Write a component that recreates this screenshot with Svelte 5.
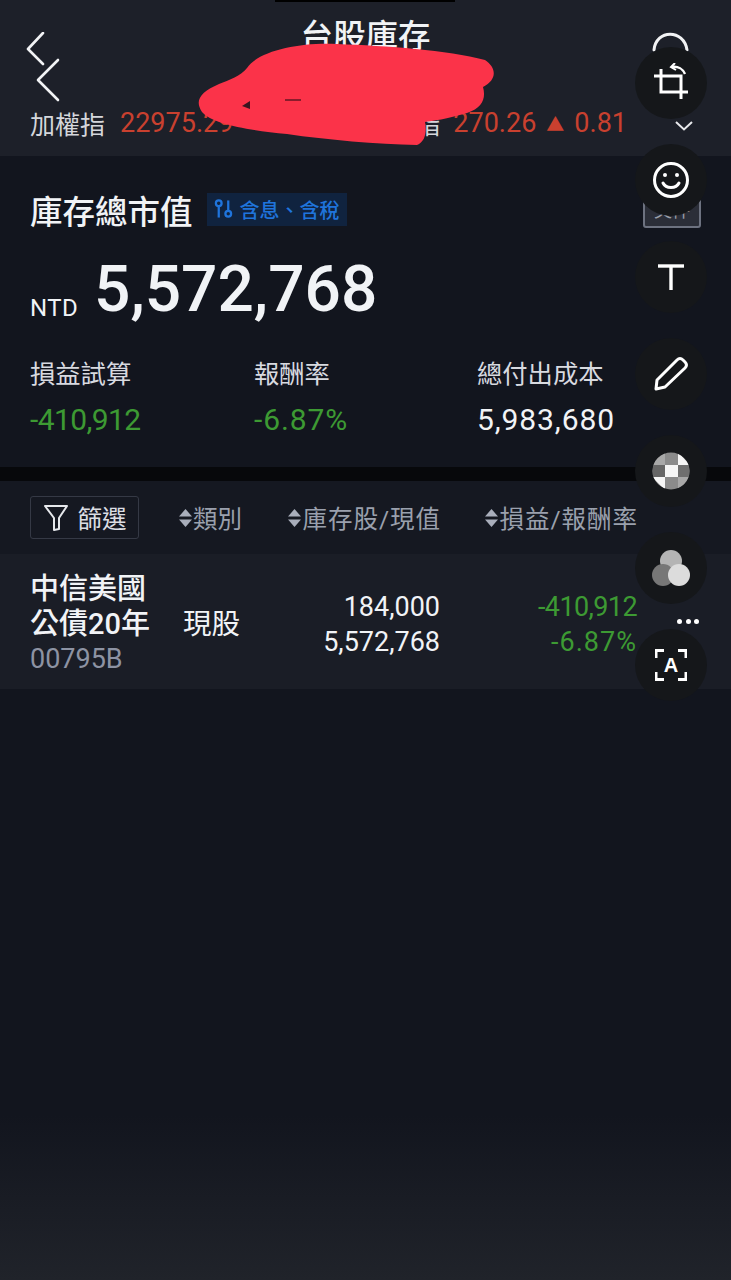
<script lang="ts">
  const stats = [
    { label: "損益試算", value: "-410,912", tone: "down tight" },
    { label: "報酬率", value: "-6.87%", tone: "down" },
    { label: "總付出成本", value: "5,983,680", tone: "" }
  ];
  const columns = ["類別", "庫存股/現值", "損益/報酬率"];
</script>

<div class="screen">
  <div class="notch"></div>

  <header class="top">
    <div class="nav">
      <svg class="back" width="40" height="70" viewBox="0 0 40 70" fill="none" stroke="#f2f3f5" stroke-width="2.6" stroke-linecap="round" stroke-linejoin="round">
        <path d="M17 1 L2 17 L17 32" />
        <path d="M32 28 L12 48 L32 68" />
      </svg>
      <h1>台股庫存</h1>
      <svg class="arc" width="38" height="20" viewBox="0 0 38 20" fill="none" stroke="#f2f3f5" stroke-width="3" stroke-linecap="round">
        <path d="M2 18 C4 -3 32 -3 35 18" />
      </svg>
    </div>
    <div class="ticker">
      <span class="tick-name">加權指</span>
      <span class="up">22975.29</span>
      <span class="tick-right">
        <span class="tick-name">櫃買指</span>
        <span class="up">270.26</span>
        <span class="up small">▲</span>
        <span class="up">0.81</span>
      </span>
      <svg class="more" width="18" height="10" viewBox="0 0 18 10" fill="none" stroke="#e8e9ec" stroke-width="2">
        <path d="M1 1 L9 8.5 L17 1" />
      </svg>
    </div>
  </header>

  <section class="summary">
    <div class="title-row">
      <h2>庫存總市值</h2>
      <div class="badge">
        <svg width="20" height="22" viewBox="0 0 20 22" fill="none" stroke="#1f74dc" stroke-width="2.4">
          <circle cx="5" cy="5" r="3" />
          <path d="M5 8 V20" />
          <path d="M15 2 V13" />
          <circle cx="15" cy="16" r="3" />
        </svg>
        <span>含息、含稅</span>
      </div>
      <div class="doc-btn"><span>文件</span></div>
    </div>
    <div class="total">
      <span class="cur">NTD</span>
      <span class="amount">5,572,768</span>
    </div>
    <div class="stats">
      {#each stats as s}
        <div class="stat">
          <div class="stat-label">{s.label}</div>
          <div class="stat-value {s.tone}">{s.value}</div>
        </div>
      {/each}
    </div>
  </section>

  <div class="divider"></div>

  <div class="table-head">
    <div class="filter">
      <svg width="26" height="28" viewBox="0 0 26 28" fill="none" stroke="#e6e8ec" stroke-width="2" stroke-linejoin="round">
        <path d="M2 2 H24 L16 14 V25 L11 26 V14 Z" />
      </svg>
      <span>篩選</span>
    </div>
    {#each columns as c, i}
      <div class="col col{i}">
        <svg width="13" height="18" viewBox="0 0 13 18" fill="#a9aebb"><path d="M6.5 0 L13 7.5 H0 Z" /><path d="M6.5 18 L13 10.5 H0 Z" /></svg>
        <span>{c}</span>
      </div>
    {/each}
  </div>

  <div class="row">
    <div class="name">
      <div>中信美國</div>
      <div>公債20年</div>
      <div class="code">00795B</div>
    </div>
    <div class="kind">現股</div>
    <div class="nums">
      <div>184,000</div>
      <div>5,572,768</div>
    </div>
    <div class="nums down">
      <div class="tight">-410,912</div>
      <div class="wide">-6.87%</div>
    </div>
  </div>

  <!-- 紅色塗抹 -->
  <svg class="scribble" width="310" height="115" viewBox="0 0 310 115">
    <path fill="#fb3349" d="M50 28 C62 10 105 2 140 4 C190 6 250 10 288 20 C300 28 300 40 286 47 C289 58 286 68 270 73 C250 79 235 81 228 82 C230 92 228 102 220 105 C180 104 130 100 90 94 C50 90 15 84 5 72 C-3 60 4 52 22 44 C32 40 44 36 50 28 Z" />
    <path fill="#3a1520" d="M45 66 L53 61 L53 69 Z" />
    <path fill="#8a1c2c" d="M88 59 H104 V61 H88 Z" />
  </svg>

  <!-- 編輯工具列 -->
  <div class="tools">
    <div class="tool">
      <svg width="40" height="40" viewBox="0 0 40 40" fill="none" stroke="#fff" stroke-width="3">
        <path d="M3 13 H30 V36" />
        <path d="M10 6 V29 H37" />
        <path d="M21 4 C27 3 32 6 34 11" stroke-width="2.4" />
        <path d="M24 0 L20 4 L25 7" stroke-width="2" />
      </svg>
    </div>
    <div class="tool">
      <svg width="38" height="38" viewBox="0 0 38 38" fill="none" stroke="#fff" stroke-width="3">
        <circle cx="19" cy="19" r="16.5" />
        <path d="M11 22 C14 28 24 28 27 22" stroke-linecap="round" />
        <circle cx="13" cy="14" r="2" fill="#fff" stroke="none" />
        <circle cx="25" cy="14" r="2" fill="#fff" stroke="none" />
      </svg>
    </div>
    <div class="tool">
      <svg width="28" height="28" viewBox="0 0 28 28" fill="none" stroke="#fff" stroke-width="3.4">
        <path d="M1 3 H27" />
        <path d="M14 3 V27" />
      </svg>
    </div>
    <div class="tool">
      <svg width="34" height="34" viewBox="0 0 34 34" fill="none" stroke="#fff" stroke-width="3" stroke-linejoin="round">
        <path d="M3 23 L23 3 C25 1 27 1 29 3 L31 5 C33 7 33 9 31 11 L11 30 L2 32 Z" />
      </svg>
    </div>
    <div class="tool">
      <svg width="38" height="38" viewBox="0 0 38 38">
        <defs><clipPath id="disc"><circle cx="19" cy="19" r="18.5" /></clipPath></defs>
        <g clip-path="url(#disc)">
          <rect width="38" height="38" fill="#8b8b8b" />
          <rect x="0" y="0" width="13" height="13" fill="#a8a8a8" />
          <rect x="0" y="13" width="13" height="12" fill="#666" />
          <rect x="13" y="13" width="13" height="12" fill="#f5f5f5" />
          <rect x="26" y="13" width="12" height="12" fill="#6f6f6f" />
          <path d="M26 0 L38 13 H26 Z" fill="#f5f5f5" />
          <path d="M0 25 L13 38 V25 Z" fill="#f5f5f5" />
          <rect x="26" y="25" width="12" height="13" fill="#a8a8a8" />
        </g>
      </svg>
    </div>
    <div class="tool">
      <svg width="38" height="36" viewBox="0 0 38 36">
        <circle cx="19" cy="11" r="11" fill="#b4b4b4" />
        <circle cx="11" cy="25" r="11" fill="#777" />
        <circle cx="27" cy="25" r="11" fill="#dcdcdc" />
      </svg>
    </div>
    <div class="tool scan">
      <svg class="corners" width="32" height="32" viewBox="0 0 32 32" fill="none" stroke="#fff" stroke-width="3">
        <path d="M1 9 V1.5 H9" />
        <path d="M23 1.5 H31 V9" />
        <path d="M1 23 V30.5 H9" />
        <path d="M23 30.5 H31 V23" />
      </svg>
      <span>A</span>
    </div>
    <div class="dots"><i></i><i></i><i></i></div>
  </div>
</div>

<style>
  :global(body) {
    margin: 0;
    background: #12151e;
  }

  .screen {
    position: relative;
    width: 731px;
    height: 1280px;
    overflow: hidden;
    background: linear-gradient(#12151e 0, #12151e 1115px, #20232a 1280px);
    font-family: Roboto, "Noto Sans CJK TC", sans-serif;
    color: #f1f3f6;
  }

  .notch {
    position: absolute;
    top: 0;
    left: 275px;
    width: 180px;
    height: 2px;
    background: #000;
  }

  .top {
    height: 156px;
    background: #1d2029;
    box-sizing: border-box;
    padding-top: 16px;
  }

  .nav {
    height: 73px;
    display: flex;
    justify-content: space-between;
    align-items: flex-start;
    padding: 16px 41px 0 26px;
    position: relative;
  }

  .nav h1 {
    position: absolute;
    left: 0;
    right: 0;
    top: -1px;
    margin: 0;
    text-align: center;
    font-size: 32.5px;
    line-height: 44px;
    font-weight: 500;
  }

  .ticker {
    display: flex;
    align-items: center;
    height: 36px;
    padding: 0 104px 0 30px;
    font-size: 25px;
    gap: 15px;
  }

  .tick-name {
    color: #d5d7dc;
  }

  .up {
    color: #c9402f;
    font-size: 27px;
  }

  .up.small {
    font-size: 18px;
  }

  .tick-right {
    margin-left: auto;
    display: flex;
    align-items: center;
    gap: 10px;
  }

  .tick-right .tick-name {
    margin-right: 3px;
  }

  .more {
    position: absolute;
    left: 675px;
    top: 121px;
  }

  .summary {
    height: 311px;
    box-sizing: border-box;
    padding: 30px 30px 0;
  }

  .title-row {
    display: flex;
    align-items: center;
    height: 46px;
    gap: 14px;
  }

  .title-row h2 {
    margin: 0;
    font-size: 32.5px;
    font-weight: 500;
  }

  .badge {
    display: flex;
    align-items: center;
    gap: 7px;
    height: 33px;
    width: 140px;
    box-sizing: border-box;
    padding: 0 7px;
    background: #10233f;
    color: #1f74dc;
    font-size: 20px;
    font-weight: 500;
    white-space: nowrap;
  }

  .doc-btn {
    margin-left: auto;
    width: 58px;
    height: 38px;
    box-sizing: border-box;
    border: 2px solid #6d7280;
    border-radius: 3px;
    background: #2b2e38;
    color: #9a9ea8;
    font-size: 18px;
    line-height: 38px;
    text-align: center;
    overflow: hidden;
  }

  .total {
    margin-top: 20px;
    white-space: nowrap;
  }

  .cur {
    font-size: 24px;
    letter-spacing: 0.4px;
    vertical-align: -5px;
    margin-right: 12px;
  }

  .amount {
    font-size: 64px;
    line-height: 76px;
    font-weight: 500;
  }

  .stats {
    display: grid;
    grid-template-columns: 224px 223px 1fr;
    margin-top: 29px;
  }

  .stat-label {
    font-size: 25.3px;
    line-height: 36px;
    color: #d8dae0;
  }

  .stat-value {
    font-size: 30px;
    line-height: 36px;
    margin-top: 9px;
    letter-spacing: 0.9px;
    color: #f1f3f6;
  }

  .stat-value.tight {
    letter-spacing: -0.6px;
  }

  .down {
    color: #3d9a33 !important;
  }

  .divider {
    height: 14px;
    background: #07080b;
  }

  .table-head {
    height: 73px;
    background: #151821;
    display: flex;
    align-items: center;
    padding-left: 30px;
    box-sizing: border-box;
    font-size: 24.5px;
    color: #9aa0ad;
  }

  .filter {
    display: flex;
    align-items: center;
    justify-content: center;
    gap: 9px;
    width: 109px;
    height: 43px;
    box-sizing: border-box;
    border: 1px solid #353945;
    border-radius: 3px;
    color: #dcdee3;
  }

  .col {
    display: flex;
    align-items: center;
    justify-content: flex-end;
    gap: 1px;
    white-space: nowrap;
  }

  .col1 span,
  .col2 span {
    letter-spacing: 1px;
  }

  .col0 {
    width: 103px;
  }

  .col1 {
    width: 199px;
  }

  .col2 {
    width: 197px;
  }

  .row {
    height: 135px;
    background: #1a1d26;
    display: grid;
    grid-template-columns: 153px 60px 197px 197px;
    align-items: center;
    padding-left: 30px;
    box-sizing: border-box;
  }

  .name {
    font-size: 29px;
    line-height: 35px;
    font-weight: 500;
    padding-top: 5px;
  }

  .code {
    font-size: 27px;
    font-weight: 400;
    color: #8d93a3;
  }

  .kind {
    font-size: 28.5px;
  }

  .nums {
    text-align: right;
    font-size: 27px;
    line-height: 35px;
    padding-top: 7px;
  }

  .tight {
    letter-spacing: -0.6px;
  }

  .wide {
    letter-spacing: 1px;
  }

  /* поверх контента */
  .scribble {
    position: absolute;
    left: 197px;
    top: 40px;
  }

  .tools {
    position: absolute;
    left: 635px;
    top: 47px;
    width: 72px;
    display: flex;
    flex-direction: column;
    gap: 25px;
  }

  .tool {
    position: relative;
    width: 72px;
    height: 72px;
    border-radius: 50%;
    background: #15171a;
    display: flex;
    align-items: center;
    justify-content: center;
  }

  .scan span {
    font-family: "Liberation Sans", sans-serif;
    font-size: 20px;
    font-weight: 700;
    color: #fff;
  }

  .corners {
    position: absolute;
    left: 20px;
    top: 20px;
  }

  .dots {
    position: absolute;
    left: 42px;
    top: 572px;
    display: flex;
    gap: 3.5px;
  }

  .dots i {
    width: 5px;
    height: 5px;
    border-radius: 50%;
    background: #fff;
  }
</style>
